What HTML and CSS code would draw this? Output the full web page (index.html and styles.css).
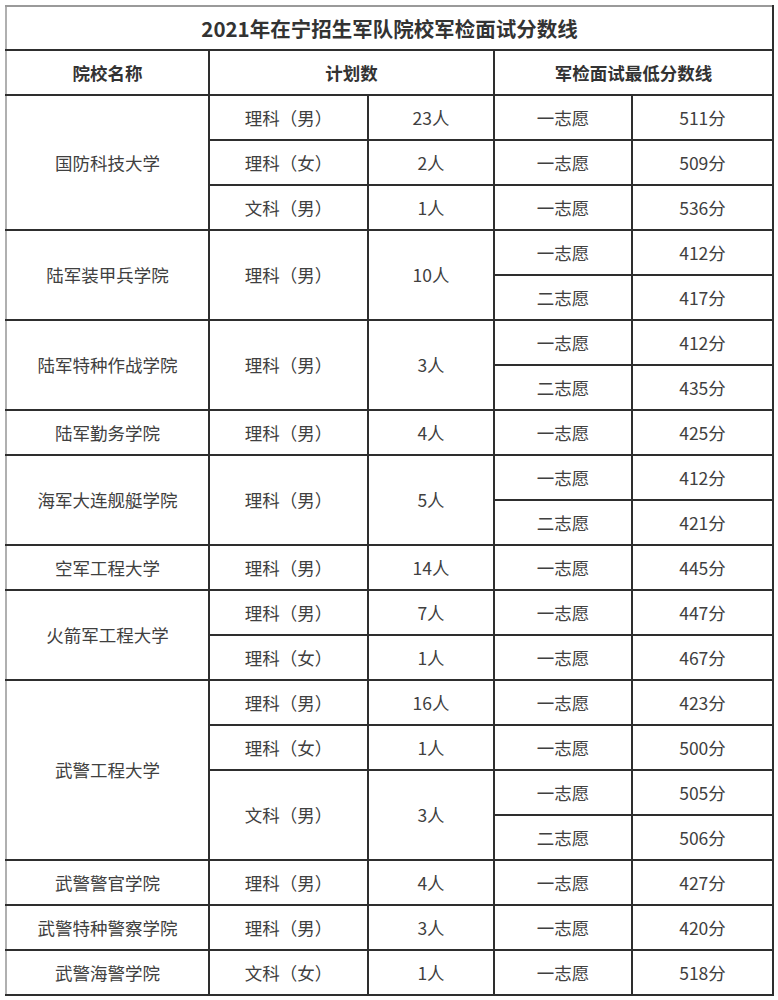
FILE: index.html
```html
<!DOCTYPE html>
<html lang="zh-CN">
<head>
<meta charset="utf-8">
<title>2021年在宁招生军队院校军检面试分数线</title>
<link rel="stylesheet" href="styles.css">
</head>
<body>
<table class="score-table">
  <colgroup>
    <col class="c-school">
    <col class="c-type">
    <col class="c-num">
    <col class="c-wish">
    <col class="c-score">
  </colgroup>
  <thead>
    <tr class="title-row"><th colspan="5">2021年在宁招生军队院校军检面试分数线</th></tr>
    <tr class="head-row">
      <th>院校名称</th>
      <th colspan="2">计划数</th>
      <th colspan="2">军检面试最低分数线</th>
    </tr>
  </thead>
  <tbody>
    <tr><td rowspan="3">国防科技大学</td><td>理科（男）</td><td>23人</td><td>一志愿</td><td>511分</td></tr>
    <tr><td>理科（女）</td><td>2人</td><td>一志愿</td><td>509分</td></tr>
    <tr><td>文科（男）</td><td>1人</td><td>一志愿</td><td>536分</td></tr>

    <tr><td rowspan="2">陆军装甲兵学院</td><td rowspan="2">理科（男）</td><td rowspan="2">10人</td><td>一志愿</td><td>412分</td></tr>
    <tr><td>二志愿</td><td>417分</td></tr>

    <tr><td rowspan="2">陆军特种作战学院</td><td rowspan="2">理科（男）</td><td rowspan="2">3人</td><td>一志愿</td><td>412分</td></tr>
    <tr><td>二志愿</td><td>435分</td></tr>

    <tr><td>陆军勤务学院</td><td>理科（男）</td><td>4人</td><td>一志愿</td><td>425分</td></tr>

    <tr><td rowspan="2">海军大连舰艇学院</td><td rowspan="2">理科（男）</td><td rowspan="2">5人</td><td>一志愿</td><td>412分</td></tr>
    <tr><td>二志愿</td><td>421分</td></tr>

    <tr><td>空军工程大学</td><td>理科（男）</td><td>14人</td><td>一志愿</td><td>445分</td></tr>

    <tr><td rowspan="2">火箭军工程大学</td><td>理科（男）</td><td>7人</td><td>一志愿</td><td>447分</td></tr>
    <tr><td>理科（女）</td><td>1人</td><td>一志愿</td><td>467分</td></tr>

    <tr><td rowspan="4">武警工程大学</td><td>理科（男）</td><td>16人</td><td>一志愿</td><td>423分</td></tr>
    <tr><td>理科（女）</td><td>1人</td><td>一志愿</td><td>500分</td></tr>
    <tr><td rowspan="2">文科（男）</td><td rowspan="2">3人</td><td>一志愿</td><td>505分</td></tr>
    <tr><td>二志愿</td><td>506分</td></tr>

    <tr><td>武警警官学院</td><td>理科（男）</td><td>4人</td><td>一志愿</td><td>427分</td></tr>
    <tr><td>武警特种警察学院</td><td>理科（男）</td><td>3人</td><td>一志愿</td><td>420分</td></tr>
    <tr><td>武警海警学院</td><td>文科（女）</td><td>1人</td><td>一志愿</td><td>518分</td></tr>
  </tbody>
</table>
</body>
</html>
```
FILE: styles.css
```css
html, body {
  margin: 0;
  padding: 0;
  background: #ffffff;
}

body {
  padding: 5px 0 0 5px;
  font-family: "Noto Sans CJK SC", "Noto Sans", sans-serif;
  color: #404040;
}

.score-table {
  border-collapse: collapse;
  table-layout: fixed;
  width: 767px;
  border-left: 2px solid #b0b0b0;
  border-top: 2px solid #9a9a9a;
  border-right: 2px solid #2e2e2e;
  border-bottom: 2px solid #2e2e2e;
}

.c-school { width: 203px; }
.c-type { width: 159px; }
.c-num { width: 126px; }
.c-wish { width: 138px; }
.c-score { width: 141px; }

.score-table th,
.score-table td {
  border: 2px solid #2e2e2e;
  text-align: center;
  vertical-align: middle;
  padding: 0;
  font-size: 17.5px;
  line-height: 20px;
}

.score-table tbody td:first-child {
  border-left: 2px solid #b0b0b0;
}

.title-row th {
  height: 42px;
  font-size: 20.5px;
  font-weight: bold;
  color: #333333;
  border-top: 2px solid #9a9a9a;
  border-left: 2px solid #b0b0b0;
}

.head-row th {
  height: 43px;
  font-weight: bold;
  color: #333333;
}

.head-row th:first-child {
  border-left: 2px solid #b0b0b0;
}

.score-table tbody tr {
  height: 45px;
}
```
